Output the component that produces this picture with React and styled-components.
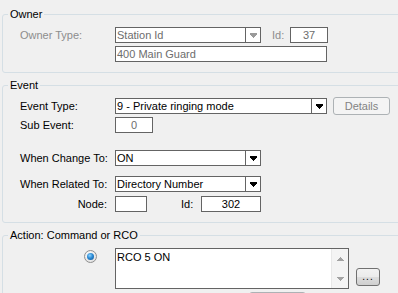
import styled, { createGlobalStyle } from 'styled-components'

const GlobalStyle = createGlobalStyle`
  html, body {
    margin: 0;
    background: #f0f0f0;
    overflow: hidden;
  }
  body {
    font-family: "Liberation Sans", Arial, sans-serif;
    font-size: 11px;
    color: #000;
  }
`;

const Page = styled.div`
  width: 430px;
  padding: 8px 0 0 2px;
  display: flex;
  flex-direction: column;
  gap: 6px;
`;

const Group = styled.fieldset`
  margin: 0;
  padding: 6px 0 ${({ $pb }) => $pb}px 0;
  border: 1px solid #d5dfe5;
  border-radius: 3px;
  min-width: 0;
`;

const Legend = styled.legend`
  margin-left: 5px;
  padding: 0 2px;
  line-height: 13px;
  font-weight: normal;
  color: #000;
`;

const Body = styled.div`
  padding-left: 17px;
  display: flex;
  flex-direction: column;
`;

const Row = styled.div`
  display: flex;
  align-items: center;
  height: 16px;
  margin-top: ${({ $mt }) => $mt || 0}px;
`;

const Label = styled.div`
  width: ${({ $w }) => $w || 95}px;
  flex: none;
  box-sizing: border-box;
  line-height: 16px;
  white-space: nowrap;
  color: ${({ $disabled }) => ($disabled ? '#8d8d8d' : '#000')};
  text-align: ${({ $right }) => ($right ? 'right' : 'left')};
  padding-right: ${({ $right }) => ($right ? 8 : 0)}px;
  margin-left: ${({ $ml }) => $ml || 0}px;
`;

const Field = styled.div`
  box-sizing: border-box;
  flex: none;
  width: ${({ $w }) => $w}px;
  height: 16px;
  border: 1px solid #646464;
  background: #fff;
  padding: 0 1px;
  line-height: 14px;
  white-space: nowrap;
  overflow: hidden;
  color: ${({ $disabled }) => ($disabled ? '#6d6d6d' : '#000')};
  text-align: ${({ $center }) => ($center ? 'center' : 'left')};
`;

const Combo = styled(Field)`
  display: flex;
  padding: 0;
`;

const ComboText = styled.div`
  flex: 1;
  padding-left: 1px;
`;

const ArrowCell = styled.div`
  width: 15px;
  box-sizing: border-box;
  border-left: 1px solid #646464;
  display: flex;
  align-items: center;
  justify-content: center;
`;

const WinButton = styled.div`
  box-sizing: border-box;
  flex: none;
  width: ${({ $w }) => $w}px;
  height: 18px;
  margin-left: ${({ $ml }) => $ml || 0}px;
  border: 1px solid ${({ $disabled }) => ($disabled ? '#adb2b5' : '#707070')};
  border-radius: 3px;
  background: ${({ $disabled }) =>
    $disabled
      ? '#f4f4f4'
      : 'linear-gradient(#f2f2f2 0%, #ebebeb 50%, #dddddd 51%, #cfcfcf 100%)'};
  color: ${({ $disabled }) => ($disabled ? '#838383' : '#000')};
  display: flex;
  align-items: center;
  justify-content: center;
  line-height: 14px;
`;

const DetailsButton = styled(WinButton)`
  margin-top: -1px;
  margin-bottom: -1px;
`;

const ActionRow = styled.div`
  display: flex;
  align-items: flex-start;
  margin-top: ${({ $mt }) => $mt || 0}px;
`;

const RadioCell = styled.div`
  width: 95px;
  flex: none;
  padding: 2px 0 0 64px;
  box-sizing: border-box;
`;

const Radio = styled.div`
  width: 13px;
  height: 13px;
  box-sizing: border-box;
  border-radius: 50%;
  border: 1px solid #8f8f8f;
  background: radial-gradient(circle at 40% 35%, #ffffff 0%, #e4e4e4 70%, #cfcfcf 100%);
  display: flex;
  align-items: center;
  justify-content: center;
`;

const RadioDot = styled.div`
  width: 7px;
  height: 7px;
  border-radius: 50%;
  background: radial-gradient(circle at 40% 35%, #8fd3ff 0%, #2a8ad4 45%, #0f4f8f 100%);
`;

const TextBox = styled.div`
  box-sizing: border-box;
  width: 234px;
  height: 41px;
  border: 1px solid #646464;
  background: #fff;
  display: flex;
`;

const TextContent = styled.div`
  flex: 1;
  padding: 2px 1px;
  line-height: 13px;
`;

const ScrollBar = styled.div`
  width: 16px;
  background: #f4f4f4;
  border-left: 1px solid #e8e8e8;
  display: flex;
  flex-direction: column;
  justify-content: space-between;
  align-items: center;
  padding: 8px 0 7px;
`;

const DotsButton = styled(WinButton)`
  align-self: flex-end;
  margin-bottom: 3px;
  font-size: 10px;
  letter-spacing: 1px;
`;

const DownGlyph = ({ color }) => (
  <svg width="7" height="5" viewBox="0 0 7 5" shapeRendering="crispEdges">
    <path d="M0 0h7v2h-1v1h-1v1h-1v1h-1v-1h-1v-1h-1v-1h-1z" fill={color} />
  </svg>
);

const ScrollArrow = ({ up }) => (
  <svg width="7" height="4" viewBox="0 0 7 4" shapeRendering="crispEdges">
    <path d={up ? 'M3 0h1v1h1v1h1v1h1v1h-7v-1h1v-1h1v-1h1z' : 'M0 0h7v1h-1v1h-1v1h-1v1h-1v-1h-1v-1h-1v-1h-1z'} fill="#a3a3a3" />
  </svg>
);

const Select = ({ w, value, disabled }) => (
  <Combo $w={w} $disabled={disabled}>
    <ComboText>{value}</ComboText>
    <ArrowCell>
      <DownGlyph color={disabled ? '#9a9a9a' : '#000'} />
    </ArrowCell>
  </Combo>
);

export default function App() {
  return (
    <>
      <GlobalStyle />
      <Page>
        <Group $pb={10}>
          <Legend>Owner</Legend>
          <Body>
            <Row>
              <Label $disabled>Owner Type:</Label>
              <Select w={146} value="Station Id" disabled />
              <Label $w={18} $ml={11} $disabled>Id:</Label>
              <Field $w={38} $disabled $center>37</Field>
            </Row>
            <Row $mt={3}>
              <Label />
              <Field $w={212} $disabled>400 Main Guard</Field>
            </Row>
          </Body>
        </Group>

        <Group $pb={10}>
          <Legend>Event</Legend>
          <Body>
            <Row>
              <Label>Event Type:</Label>
              <Select w={212} value="9 - Private ringing mode" />
              <DetailsButton $w={57} $ml={6} $disabled>Details</DetailsButton>
            </Row>
            <Row $mt={3}>
              <Label>Sub Event:</Label>
              <Field $w={38} $disabled $center>0</Field>
            </Row>
            <Row $mt={17}>
              <Label>When Change To:</Label>
              <Select w={146} value="ON" />
            </Row>
            <Row $mt={10}>
              <Label>When Related To:</Label>
              <Select w={146} value="Directory Number" />
            </Row>
            <Row $mt={4}>
              <Label $right>Node:</Label>
              <Field $w={32} />
              <Label $w={20} $ml={34}>Id:</Label>
              <Field $w={60} $center>302</Field>
            </Row>
          </Body>
        </Group>

        <Group $pb={10}>
          <Legend>Action: Command or RCO</Legend>
          <Body>
            <ActionRow>
              <RadioCell>
                <Radio>
                  <RadioDot />
                </Radio>
              </RadioCell>
              <TextBox>
                <TextContent>RCO 5 ON</TextContent>
                <ScrollBar>
                  <ScrollArrow up />
                  <ScrollArrow />
                </ScrollBar>
              </TextBox>
              <DotsButton $w={24} $ml={7}>...</DotsButton>
            </ActionRow>
            <ActionRow $mt={3}>
              <WinButton $w={57} $ml={229} $disabled />
            </ActionRow>
          </Body>
        </Group>
      </Page>
    </>
  );
}
